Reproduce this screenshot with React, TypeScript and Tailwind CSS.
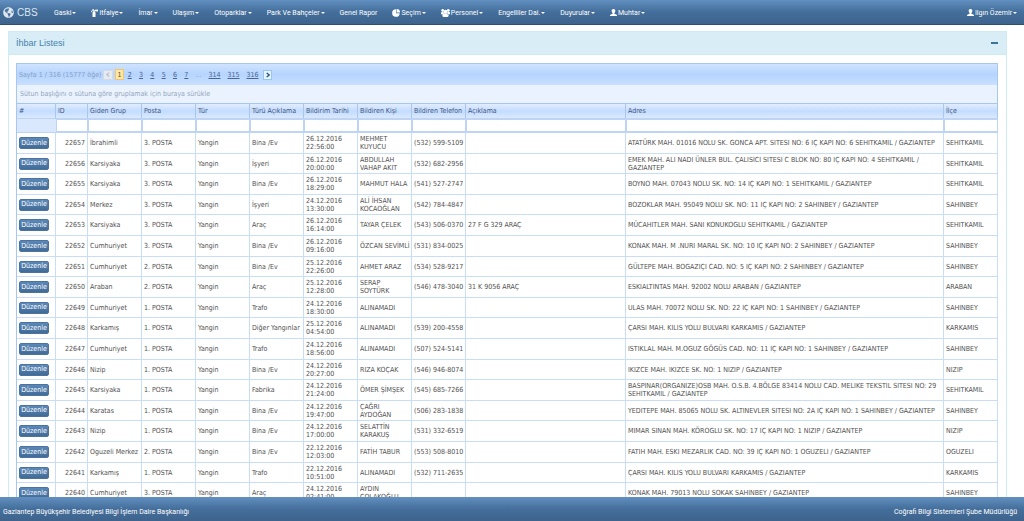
import React, { useState } from 'react';
import { FaFireExtinguisher, FaGlobeAmericas } from 'react-icons/fa';

// ── Types ─────────────────────────────────────────────────────────────

interface MenuItem {
  label: string;
  icon?: React.ReactNode;
  caret?: boolean;
}

interface Ihbar {
  id: number;
  grup: string;
  posta: string;
  aciklamaTuru: string;
  tarih: string;
  kisi: string;
  telefon: string;
  aciklama?: string;
  adres: string;
  ilce: string;
}

// ── Icons ─────────────────────────────────────────────────────────────

function UserIcon() {
  return (
    <svg viewBox="0 0 14 14" className="w-[7px] h-[7px] shrink-0" fill="currentColor" aria-hidden="true">
      <path d="M7 0C4.400 0 3.200 1.700 3.300 4c.1 1.900.8 3.300 1.900 4.200v1.300L1.500 11C.5 11.400 0 12 0 13v1h14v-1c0-1-.5-1.600-1.500-2L8.800 9.500V8.200C9.900 7.300 10.600 5.900 10.700 4 10.800 1.700 9.600 0 7 0z" />
    </svg>
  );
}

function UsersIcon() {
  return (
    <svg viewBox="0 0 16 14" className="w-[9px] h-[8px] shrink-0" fill="currentColor" aria-hidden="true">
      <circle cx="3" cy="2.500" r="2.500" />
      <circle cx="13" cy="2.500" r="2.500" />
      <circle cx="8" cy="4.500" r="3.300" />
      <path d="M0 9V6.500C0 5.500.8 5 1.800 5h3v4H0zM16 9V6.500c0-1-.8-1.500-1.800-1.500h-3v4H16zM2.500 12c0-3 1-4.500 3-4.500h5c2 0 3 1.500 3 4.500 0 1.300-.8 2-2 2h-7c-1.200 0-2-.7-2-2z" />
    </svg>
  );
}

function PieIcon() {
  return (
    <svg viewBox="0 0 14 14" className="w-[8px] h-[8px] shrink-0" fill="currentColor" aria-hidden="true">
      <path d="M7 .5v6.800h6.500A6.600 6.600 0 1 1 7 .5z" />
      <path d="M8 0a6 6 0 0 1 6 6H8z" />
    </svg>
  );
}

function Caret() {
  return (
    <svg viewBox="0 0 8 4" className="w-[4px] h-[2px] shrink-0" fill="currentColor" aria-hidden="true">
      <path d="M0 0h8L4 4z" />
    </svg>
  );
}

// ── Data ──────────────────────────────────────────────────────────────

const menu: MenuItem[] = [
  { label: 'Gaski', caret: true },
  { label: 'itfaiye', icon: <FaFireExtinguisher className="w-[7px] h-[8px]" />, caret: true },
  { label: 'İmar', caret: true },
  { label: 'Ulaşım', caret: true },
  { label: 'Otoparklar', caret: true },
  { label: 'Park Ve Bahçeler', caret: true },
  { label: 'Genel Rapor' },
  { label: 'Seçim', icon: <PieIcon />, caret: true },
  { label: 'Personel', icon: <UsersIcon />, caret: true },
  { label: 'Engelliler Dai.', caret: true },
  { label: 'Duyurular', caret: true },
  { label: 'Muhtar', icon: <UserIcon />, caret: true },
];

const columns = [
  { title: '#', width: 'w-[39px]' },
  { title: 'ID', width: 'w-[32px]' },
  { title: 'Giden Grup', width: 'w-[54px]' },
  { title: 'Posta', width: 'w-[54px]' },
  { title: 'Tür', width: 'w-[54px]' },
  { title: 'Türü Açıklama', width: 'w-[54px]' },
  { title: 'Bildirim Tarihi', width: 'w-[54px]' },
  { title: 'Bildiren Kişi', width: 'w-[54px]' },
  { title: 'Bildiren Telefon', width: 'w-[54px]' },
  { title: 'Açıklama', width: 'w-[160px]' },
  { title: 'Adres', width: '' },
  { title: 'İlçe', width: 'w-[54px]' },
];

const rows: Ihbar[] = [
  { id: 22657, grup: 'İbrahimli', posta: '3. POSTA', aciklamaTuru: 'Bina /Ev', tarih: '26.12.2016\n22:56:00', kisi: 'MEHMET\nKUYUCU', telefon: '(532) 599-5109', adres: 'ATATÜRK MAH. 01016 NOLU SK. GONCA APT. SITESI NO: 6 IÇ KAPI NO: 6 SEHITKAMIL / GAZIANTEP', ilce: 'SEHITKAMIL' },
  { id: 22656, grup: 'Karsiyaka', posta: '3. POSTA', aciklamaTuru: 'İşyeri', tarih: '26.12.2016\n20:00:00', kisi: 'ABDULLAH\nVAHAP AKIT', telefon: '(532) 682-2956', adres: 'EMEK MAH. ALI NADI ÜNLER BUL. ÇALISICI SITESI C BLOK NO: 80 IÇ KAPI NO: 4 SEHITKAMIL /\nGAZIANTEP', ilce: 'SEHITKAMIL' },
  { id: 22655, grup: 'Karsiyaka', posta: '3. POSTA', aciklamaTuru: 'Bina /Ev', tarih: '26.12.2016\n18:29:00', kisi: 'MAHMUT HALA', telefon: '(541) 527-2747', adres: 'BOYNO MAH. 07043 NOLU SK. NO: 14 IÇ KAPI NO: 1 SEHITKAMIL / GAZIANTEP', ilce: 'SEHITKAMIL' },
  { id: 22654, grup: 'Merkez', posta: '3. POSTA', aciklamaTuru: 'İşyeri', tarih: '24.12.2016\n13:30:00', kisi: 'ALİ İHSAN\nKOCAOĞLAN', telefon: '(542) 784-4847', adres: 'BOZOKLAR MAH. 95049 NOLU SK. NO: 11 IÇ KAPI NO: 2 SAHINBEY / GAZIANTEP', ilce: 'SAHINBEY' },
  { id: 22653, grup: 'Karsiyaka', posta: '3. POSTA', aciklamaTuru: 'Araç', tarih: '26.12.2016\n16:14:00', kisi: 'TAYAR ÇELEK', telefon: '(543) 506-0370', aciklama: '27 F G 329 ARAÇ', adres: 'MÜCAHITLER MAH. SANI KONUKOGLU SEHITKAMIL / GAZIANTEP', ilce: 'SEHITKAMIL' },
  { id: 22652, grup: 'Cumhuriyet', posta: '3. POSTA', aciklamaTuru: 'Bina /Ev', tarih: '26.12.2016\n09:16:00', kisi: 'ÖZCAN SEVİMLİ', telefon: '(531) 834-0025', adres: 'KONAK MAH. M .NURI MARAL SK. NO: 10 IÇ KAPI NO: 2 SAHINBEY / GAZIANTEP', ilce: 'SAHINBEY' },
  { id: 22651, grup: 'Cumhuriyet', posta: '2. POSTA', aciklamaTuru: 'Bina /Ev', tarih: '25.12.2016\n22:26:00', kisi: 'AHMET ARAZ', telefon: '(534) 528-9217', adres: 'GÜLTEPE MAH. BOGAZIÇI CAD. NO: 5 IÇ KAPI NO: 2 SAHINBEY / GAZIANTEP', ilce: 'SAHINBEY' },
  { id: 22650, grup: 'Araban', posta: '2. POSTA', aciklamaTuru: 'Araç', tarih: '25.12.2016\n12:28:00', kisi: 'SERAP\nSOYTÜRK', telefon: '(546) 478-3040', aciklama: '31 K 9056 ARAÇ', adres: 'ESKIALTINTAS MAH. 92002 NOLU ARABAN / GAZIANTEP', ilce: 'ARABAN' },
  { id: 22649, grup: 'Cumhuriyet', posta: '1. POSTA', aciklamaTuru: 'Trafo', tarih: '24.12.2016\n18:30:00', kisi: 'ALINAMADI', telefon: '', adres: 'ULAS MAH. 70072 NOLU SK. NO: 22 IÇ KAPI NO: 1 SAHINBEY / GAZIANTEP', ilce: 'SAHINBEY' },
  { id: 22648, grup: 'Karkamış', posta: '1. POSTA', aciklamaTuru: 'Diğer Yangınlar', tarih: '25.12.2016\n04:54:00', kisi: 'ALINAMADI', telefon: '(539) 200-4558', adres: 'ÇARSI MAH. KILIS YOLU BULVARI KARKAMIS / GAZIANTEP', ilce: 'KARKAMIS' },
  { id: 22647, grup: 'Cumhuriyet', posta: '1. POSTA', aciklamaTuru: 'Trafo', tarih: '24.12.2016\n18:56:00', kisi: 'ALINAMADI', telefon: '(507) 524-5141', adres: 'ISTIKLAL MAH. M.OGUZ GÖGÜS CAD. NO: 11 IÇ KAPI NO: 1 SAHINBEY / GAZIANTEP', ilce: 'SAHINBEY' },
  { id: 22646, grup: 'Nizip', posta: '1. POSTA', aciklamaTuru: 'Bina /Ev', tarih: '24.12.2016\n20:27:00', kisi: 'RIZA KOÇAK', telefon: '(546) 946-8074', adres: 'IKIZCE MAH. IKIZCE SK. NO: 1 NIZIP / GAZIANTEP', ilce: 'NIZIP' },
  { id: 22645, grup: 'Karsiyaka', posta: '1. POSTA', aciklamaTuru: 'Fabrika', tarih: '24.12.2016\n21:24:00', kisi: 'ÖMER ŞİMŞEK', telefon: '(545) 685-7266', adres: 'BASPINAR(ORGANIZE)OSB MAH. O.S.B. 4.BÖLGE 83414 NOLU CAD. MELIKE TEKSTIL SITESI NO: 29\nSEHITKAMIL / GAZIANTEP', ilce: 'SEHITKAMIL' },
  { id: 22644, grup: 'Karatas', posta: '1. POSTA', aciklamaTuru: 'Bina /Ev', tarih: '24.12.2016\n19:47:00', kisi: 'ÇAĞRI\nAYDOĞAN', telefon: '(506) 283-1838', adres: 'YEDITEPE MAH. 85065 NOLU SK. ALTINEVLER SITESI NO: 2A IÇ KAPI NO: 1 SAHINBEY / GAZIANTEP', ilce: 'SAHINBEY' },
  { id: 22643, grup: 'Nizip', posta: '1. POSTA', aciklamaTuru: 'Bina /Ev', tarih: '24.12.2016\n17:00:00', kisi: 'SELATTİN\nKARAKUŞ', telefon: '(531) 332-6519', adres: 'MIMAR SINAN MAH. KÖROGLU SK. NO: 17 IÇ KAPI NO: 1 NIZIP / GAZIANTEP', ilce: 'NIZIP' },
  { id: 22642, grup: 'Oguzeli Merkez', posta: '2. POSTA', aciklamaTuru: 'Bina /Ev', tarih: '22.12.2016\n12:03:00', kisi: 'FATİH TABUR', telefon: '(553) 508-8010', adres: 'FATIH MAH. ESKI MEZARLIK CAD. NO: 39 IÇ KAPI NO: 1 OGUZELI / GAZIANTEP', ilce: 'OGUZELI' },
  { id: 22641, grup: 'Karkamış', posta: '1. POSTA', aciklamaTuru: 'Trafo', tarih: '22.12.2016\n10:51:00', kisi: 'ALINAMADI', telefon: '(532) 711-2635', adres: 'ÇARSI MAH. KILIS YOLU BULVARI KARKAMIS / GAZIANTEP', ilce: 'KARKAMIS' },
  { id: 22640, grup: 'Cumhuriyet', posta: '3. POSTA', aciklamaTuru: 'Araç', tarih: '24.12.2016\n02:41:00', kisi: 'AYDIN\nÇOLAKOĞLU', telefon: '', adres: 'KONAK MAH. 79013 NOLU SOKAK SAHINBEY / GAZIANTEP', ilce: 'SAHINBEY' },
];

const pages = ['2', '3', '4', '5', '6', '7'];
const lastPages = ['314', '315', '316'];

// ── Navbar ────────────────────────────────────────────────────────────

function Navbar() {
  return (
    <header className="flex h-[25px] shrink-0 items-center border-b border-[#2f4f70] bg-linear-to-b from-[#6290c0] via-[#446e9b] to-[#3e648d] pl-[3px] pr-[7px] pt-px text-[7px] leading-[10px] text-white">
      <a href="#" className="flex w-[51px] items-center gap-[3px] font-['Liberation_Sans',Arial,sans-serif] text-[10px] text-[#dde6ef]">
        <FaGlobeAmericas className="h-[11px] w-[11px]" />
        CBS
      </a>
      <nav className="flex items-center gap-[15px]">
        {menu.map((m) => (
          <button key={m.label} type="button" className="flex items-center gap-px whitespace-nowrap">
            {m.icon}
            {m.label}
            {m.caret && <Caret />}
          </button>
        ))}
      </nav>
      <button type="button" className="ml-auto flex items-center gap-px whitespace-nowrap">
        <UserIcon />
        Ilgın Özemir
        <Caret />
      </button>
    </header>
  );
}

// ── Grid ──────────────────────────────────────────────────────────────

function Pager() {
  return (
    <div className="flex h-[21px] items-center border-r border-[#a9c7ee] bg-linear-to-b from-[#cfe3ff] via-[#b5d4ff] to-[#c9e0ff] pl-[2px] text-[7px] leading-[10px] text-[#4a6590]">
      <span className="w-[84px] whitespace-nowrap text-[#8aa0c4]">Sayfa 1 / 316 (15777 öğe)</span>
      <button type="button" disabled aria-label="Önceki" className="flex h-[10px] w-[10px] items-center justify-center border border-[#d5dbe2] bg-[#e6ebf1] text-[#b9c3cf]">
        <svg viewBox="0 0 6 8" className="h-[5px] w-[4px]" fill="none" stroke="currentColor" strokeWidth="2"><path d="M5 1L1 4l4 3" /></svg>
      </button>
      <span className="ml-[2px] flex h-[11px] w-[9px] items-center justify-center border border-[#f0c673] bg-[#ffe7a2] text-[#5a4a28]">1</span>
      <div className="flex w-[68px]">
        {pages.map((p) => (
          <a key={p} href="#" className="flex-1 text-center underline">{p}</a>
        ))}
      </div>
      <span className="w-[13px] text-center text-[#8aa0c4]">…</span>
      <div className="flex">
        {lastPages.map((p) => (
          <a key={p} href="#" className="w-[19px] text-center underline">{p}</a>
        ))}
      </div>
      <button type="button" aria-label="Sonraki" className="ml-px flex h-[10px] w-[9px] items-center justify-center border border-[#9ac6ee] bg-[#e3f3ff] text-[#24507c]">
        <svg viewBox="0 0 6 8" className="h-[6px] w-[4px]" fill="none" stroke="currentColor" strokeWidth="2"><path d="M1 1l4 3-4 3" /></svg>
      </button>
    </div>
  );
}

function IhbarTable() {
  const cell = 'border-b border-r border-[#c9ddf7] px-[2px] whitespace-pre';

  return (
    <table className="w-full table-fixed border-separate border-spacing-0 text-[7px] leading-[8px] text-[#505050]">
      <colgroup>
        {columns.map((c) => (
          <col key={c.title} className={c.width} />
        ))}
      </colgroup>
      <thead>
        <tr className="h-[15px]">
          {columns.map((c) => (
            <th
              key={c.title}
              scope="col"
              className="whitespace-nowrap border-r border-t border-[#a9c7ee] bg-linear-to-b from-[#e2edff] via-[#c3dcff] to-[#dae9ff] px-[2px] text-left font-normal text-[#3f5580]"
            >
              {c.title}
            </th>
          ))}
        </tr>
        <tr className="h-[15px] bg-[#d9e8fd]">
          {columns.map((c, i) => (
            <td key={c.title} className="border-b border-t border-[#bdd4f4] p-0">
              {i > 0 && (
                <input aria-label={`${c.title} filtresi`} className="block h-[13px] w-full border border-[#bdd4f4] bg-white px-px outline-none" />
              )}
            </td>
          ))}
        </tr>
      </thead>
      <tbody>
        {rows.map((r) => (
          <tr key={r.id} className="h-[21px] nth-[5n+2]:h-[20px] nth-[5n+4]:h-[20px]">
            <td className={cell}>
              <button type="button" className="block h-[12px] w-[30px] rounded-[2px] border border-[#4a73a0] bg-linear-to-b from-[#5a88b8] to-[#426b97] text-[7px] leading-[9px] text-white">
                Düzenle
              </button>
            </td>
            <td className={`${cell} text-right`}>{r.id}</td>
            <td className={cell}>{r.grup}</td>
            <td className={cell}>{r.posta}</td>
            <td className={cell}>Yangin</td>
            <td className={cell}>{r.aciklamaTuru}</td>
            <td className={cell}>{r.tarih}</td>
            <td className={cell}>{r.kisi}</td>
            <td className={cell}>{r.telefon}</td>
            <td className={cell}>{r.aciklama}</td>
            <td className={cell}>{r.adres}</td>
            <td className={cell}>{r.ilce}</td>
          </tr>
        ))}
      </tbody>
    </table>
  );
}

// ── Page ──────────────────────────────────────────────────────────────

export default function App() {
  const [open, setOpen] = useState(true);

  return (
    <div className="flex h-screen flex-col bg-white font-[Roboto,sans-serif]">
      <Navbar />

      <main className="min-h-0 flex-1 overflow-y-auto pl-2 pr-[17px] pt-[6px] [scrollbar-width:none]">
        <section className="border border-[#cdebf3]">
          <div className="flex h-[23px] items-center justify-between border-b border-[#cdebf3] bg-[#d9edf7] pl-[7px] pr-2 text-[#4482ad]">
            <h1 className="font-['Liberation_Sans',Arial,sans-serif] text-[9px] leading-[12px]">İhbar Listesi</h1>
            <button type="button" aria-label="Daralt" onClick={() => setOpen(!open)} className="flex h-[12px] items-center">
              <span className="block h-[2px] w-[7px] bg-[#3f7299]" />
            </button>
          </div>
          {open && (
            <div className="pb-2 pl-[7px] pr-2 pt-[8px] font-['DejaVu_Sans_Condensed','DejaVu_Sans',sans-serif]">
              <div className="border border-r-0 border-[#a9c7ee]">
                <Pager />
                <div className="h-[18px] border-r border-[#a9c7ee] bg-[#eaf3fd] pl-[3px] text-[7px] leading-[18px] text-[#93a5c0]">
                  Sütun başlığını o sütuna göre gruplamak için buraya sürükle
                </div>
                <IhbarTable />
              </div>
            </div>
          )}
        </section>
      </main>

      <footer className="flex h-[24px] shrink-0 items-center justify-between bg-linear-to-b from-[#6290c0] via-[#446e9b] to-[#3e648d] pl-[3px] pr-[7px] pt-[6px] text-[7px] leading-[10px] text-white">
        <span>Gaziantep Büyükşehir Belediyesi Bilgi İşlem Daire Başkanlığı</span>
        <span>Coğrafi Bilgi Sistemleri Şube Müdürlüğü</span>
      </footer>
    </div>
  );
}
